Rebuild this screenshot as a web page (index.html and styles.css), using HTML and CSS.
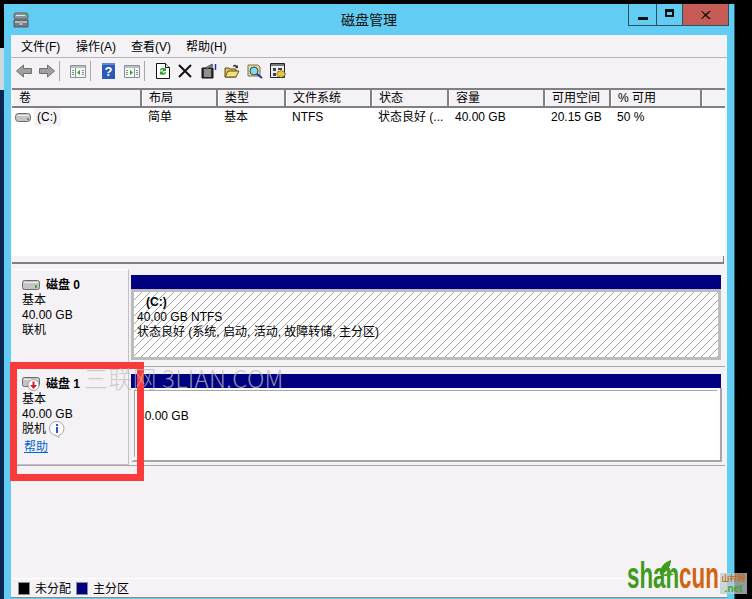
FILE: index.html
```html
<!DOCTYPE html>
<html lang="zh-CN">

<head>
  <meta name="viewport" content="width=device-width, initial-scale=1.0">
  <meta charset="utf-8">
  <title>磁盘管理</title>

  <link rel="stylesheet" href="styles.css">
</head>

<body>
  <div class="screen">
    <!-- 左侧露出的桌面 -->
    <div class="desk-edge">
      <div class="edge-top"></div>
      <div class="edge-light"></div>
      <div class="edge-dark"></div>
    </div>

    <div class="window">
      <div class="titlebar">
        <div class="title-left">
          <svg class="app-icon" width="16" height="16" viewBox="0 0 16 16">
            <path d="M2 1h12l1 2v3l-1 1H2L1 6V3z" fill="#8d9499" stroke="#5c6468"/>
            <path d="M3 3h9v1H3z" fill="#dfe4e6"/>
            <path d="M12 2h2v2h-2z" fill="#49c04a"/>
            <path d="M1 8h14v7H1z" fill="#767e84" stroke="#4e565a"/>
            <path d="M2 9h12v2H2z" fill="#b4bbc0"/>
            <path d="M6 11h4v2H6z" fill="#dfe4e6" stroke="#4e565a" stroke-width=".5"/>
          </svg>
        </div>
        <div class="title-text">磁盘管理</div>
        <div class="caption">
          <div class="cap-btn cap-min"><span></span></div>
          <div class="cap-btn cap-max"><span></span></div>
          <div class="cap-btn cap-close">
            <svg width="10" height="8" viewBox="0 0 10 8"><path d="M1 0l3.500 3L8 0h2L5.700 4 10 8H8L4.500 5 1 8H0l3.500-4L0 0z" fill="#111"/></svg>
          </div>
        </div>
      </div>

      <div class="client">
        <div class="menubar">
          <span class="menu-item">文件(F)</span>
          <span class="menu-item">操作(A)</span>
          <span class="menu-item">查看(V)</span>
          <span class="menu-item">帮助(H)</span>
        </div>

        <div class="toolbar">
          <svg class="tool" width="16" height="16" viewBox="0 0 16 16"><path d="M.5 8l7-6v3.500h8v5h-8V14z" fill="#a0a0a0" stroke="#707070"/></svg>
          <svg class="tool tool-fwd" width="16" height="16" viewBox="0 0 16 16"><path d="M15.500 8l-7-6v3.500h-8v5h8V14z" fill="#a0a0a0" stroke="#707070"/></svg>
          <i class="tool-sep"></i>
          <svg class="tool tool-tree" width="16" height="16" viewBox="0 0 16 16">
            <path d="M.5 2.500h15v12H.5z" fill="#f4f6f4" stroke="#8a9498"/><path d="M1 3h14v2H1z" fill="#b6c0c6"/>
            <path d="M5.500 5v9" stroke="#8a9498"/><path d="M2 7h2v1H2zM2 9h2v1H2zM2 11h2v1H2zM12 7h2v1h-2zM12 9h2v1h-2zM12 11h2v1h-2z" fill="#7f8f9c"/>
            <path d="M10 7v5L7 9.500z" fill="#2fa52f"/>
          </svg>
          <i class="tool-sep"></i>
          <svg class="tool tool-help" width="13" height="16" viewBox="0 0 13 16">
            <path d="M0 0h13v16H0z" fill="#2c58b8"/><path d="M0 0h13v2H0z" fill="#5d88d8"/>
            <text x="6.500" y="13" class="help-mark">?</text>
          </svg>
          <svg class="tool tool-panel" width="16" height="16" viewBox="0 0 16 16">
            <path d="M.5 2.500h15v12H.5z" fill="#f4f6f4" stroke="#8a9498"/><path d="M1 3h14v2H1z" fill="#b6c0c6"/>
            <path d="M10.500 5v9" stroke="#8a9498"/><path d="M2 7h2v1H2zM2 9h2v1H2zM2 11h2v1H2zM12 7h2v1h-2zM12 9h2v1h-2zM12 11h2v1h-2z" fill="#7f8f9c"/>
            <path d="M6 7v5l3-2.500z" fill="#2fa52f"/>
          </svg>
          <i class="tool-sep"></i>
          <svg class="tool tool-refresh" width="14" height="16" viewBox="0 0 14 16">
            <path d="M.5.500h9l4 4v11H.500z" fill="#fff" stroke="#111"/><path d="M9.500.500v4h4" fill="#e8e8e8" stroke="#111"/>
            <path d="M4 7a3 3 0 0 1 5-1.500L10 4v4H6l1.500-1.200A1.500 1.500 0 0 0 5 8z" fill="#2f9e2f"/>
            <path d="M10 9.500a3 3 0 0 1-5 1.500L4 12.500v-4h4L6.500 9.700A1.500 1.500 0 0 0 9 8.500z" fill="#2f9e2f"/>
          </svg>
          <svg class="tool tool-del" width="14" height="14" viewBox="0 0 14 14"><path d="M1 1l12 12M13 1L1 13" stroke="#111" stroke-width="2"/></svg>
          <svg class="tool tool-props" width="16" height="16" viewBox="0 0 16 16">
            <path d="M1 5h11v10H1z" fill="#333" stroke="#111"/><path d="M3 7h7M3 9h7M3 11h7M3 13h7" stroke="#eee"/>
            <path d="M4 5l7-4 1 2-6 3z" fill="#888" stroke="#222" stroke-width=".6"/><path d="M14.500 1v6" stroke="#2233aa" stroke-width="1.500"/>
          </svg>
          <svg class="tool tool-folder" width="16" height="16" viewBox="0 0 16 16">
            <path d="M1 5h4l1 1h6v8H1z" fill="#e8c34e" stroke="#5d5020"/><path d="M1 14l3-6h11l-3 6z" fill="#f6de7c" stroke="#5d5020"/>
            <path d="M9 3c2-2 3-1 4 0l1-1v3h-3l1-1c-1-.6-2-.6-3 0z" fill="#333"/>
          </svg>
          <svg class="tool tool-find" width="16" height="16" viewBox="0 0 16 16">
            <path d="M1 2h10l2 2v9H1z" fill="#e0d9a6" stroke="#77744e"/>
            <circle cx="7" cy="8" r="4" fill="#7fd8ec" stroke="#444"/>
            <path d="M10 11l5 4" stroke="#2233aa" stroke-width="2"/>
          </svg>
          <svg class="tool tool-gear" width="16" height="16" viewBox="0 0 16 16">
            <path d="M.5.500h14v14H.500z" fill="#eee" stroke="#222"/><path d="M1 1h13v2H1z" fill="#777"/>
            <path d="M3 5h3v3H3zM8 5h4v2H8zM3 10h3v3H3z" fill="#444"/>
            <path d="M11 7l1 1.500 2-.5.500 2 1.500 1-1.500 1-.500 2-2-.5-1 1.500-1-1.500-2 .5-.5-2L6 11l1.500-1 .5-2 2 .5z" fill="#e8c92c" stroke="#444" stroke-width=".5"/>
          </svg>
        </div>

        <div class="list-pane">
          <div class="list-head">
            <div>卷</div>
            <div>布局</div>
            <div>类型</div>
            <div>文件系统</div>
            <div>状态</div>
            <div>容量</div>
            <div>可用空间</div>
            <div>% 可用</div>
            <div></div>
          </div>
          <div class="list-body">
            <div class="list-row">
              <div class="vol-cell">
                <svg class="disk-icon" width="16" height="9" viewBox="0 0 16 9">
                  <rect x=".5" y=".5" width="15" height="8" rx="3" fill="#c4c4c4" stroke="#6c6c6c"/>
                  <path d="M2 2h12v1H2z" fill="#ececec"/><path d="M12 5h2v2h-2z" fill="#4ca84c"/>
                </svg>
                <span class="vol-name">(C:)</span>
              </div>
              <div>简单</div>
              <div>基本</div>
              <div>NTFS</div>
              <div>状态良好 (...</div>
              <div>40.00 GB</div>
              <div>20.15 GB</div>
              <div>50 %</div>
              <div></div>
            </div>
          </div>
          <div class="list-foot"></div>
        </div>

        <div class="disks">
          <div class="disk-row disk-row-0">
            <div class="disk-label">
              <div class="disk-name">
                <svg width="18" height="10" viewBox="0 0 18 10">
                  <rect x=".5" y=".5" width="17" height="9" rx="2" fill="#c4c4c4" stroke="#6c6c6c"/>
                  <path d="M2 2h14v1H2z" fill="#ececec"/><path d="M13 5h2v3h-2z" fill="#4ca84c"/>
                </svg>
                <b>磁盘 0</b>
              </div>
              <div class="disk-line">基本</div>
              <div class="disk-line">40.00 GB</div>
              <div class="disk-line">联机</div>
            </div>
            <div class="disk-map">
              <div class="navy-bar"></div>
              <div class="part-online">
                <div class="part-hatch">
                  <b class="part-name">(C:)</b>
                  <div>40.00 GB NTFS</div>
                  <div>状态良好 (系统, 启动, 活动, 故障转储, 主分区)</div>
                </div>
              </div>
            </div>
          </div>

          <div class="disk-row disk-row-1">
            <div class="disk-label">
              <div class="disk-name">
                <svg width="18" height="14" viewBox="0 0 18 14">
                  <rect x=".5" y=".5" width="17" height="9" rx="2" fill="#c4c4c4" stroke="#6c6c6c"/>
                  <path d="M2 2h14v1H2z" fill="#ececec"/>
                  <circle cx="11.500" cy="8" r="5.500" fill="#fff" stroke="#999"/>
                  <path d="M10.500 4.500h2V8H15l-3.500 4L8 8h2.500z" fill="#d2202a"/>
                </svg>
                <b>磁盘 1</b>
              </div>
              <div class="disk-line">基本</div>
              <div class="disk-line">40.00 GB</div>
              <div class="disk-line offline">
                脱机
                <svg width="16" height="17" viewBox="0 0 16 17">
                  <path d="M8 .5a7 7 0 0 1 2 13.700V16.500L7 14.500A7 7 0 0 1 8 .5z" fill="#fbfbfb" stroke="#a8a8a8"/>
                  <path d="M7 3h2v2H7zM7 6h2v6H7z" fill="#1f5fc8"/>
                </svg>
              </div>
              <a class="help-link">帮助</a>
            </div>
            <div class="disk-map">
              <div class="navy-bar"></div>
              <div class="part-offline">
                <div class="part-white">40.00 GB</div>
              </div>
            </div>
          </div>
        </div>

        <div class="spare"></div>

        <div class="legend">
          <i class="swatch swatch-black"></i><span class="legend-text">未分配</span>
          <i class="swatch swatch-navy"></i><span class="legend-text">主分区</span>
        </div>
      </div>
    </div>

    <!-- 截图上后加的标注和水印 -->
    <div class="red-mark"></div>
    <div class="watermark">三联网 3LIAN.COM</div>
    <div class="logo">
      <span class="logo-word"><span class="logo-shan">shan</span><span class="logo-cun">cun</span></span>
      <svg class="logo-leaf" width="18" height="16" viewBox="0 0 18 16">
        <path d="M4 15C3 8 8 2 15 0c0 7-4 12-11 15z" fill="#3f9a1e"/>
        <path d="M6 15c3-1 8-2 12-1-3 2-8 3-12 1z" fill="#4aa526"/>
      </svg>
      <div class="logo-tail">
        <div class="logo-cn">山村网</div>
        <div class="logo-net">.net</div>
      </div>
    </div>
  </div>
</body>

</html>
```

FILE: styles.css
```css
html, body {
  margin: 0;
  padding: 0;
  background: #000;
}

.screen {
  position: relative;
  display: flex;
  width: 752px;
  height: 599px;
  overflow: hidden;
  background: #000;
  font-family: "Liberation Sans", "Noto Sans CJK SC", sans-serif;
  font-size: 12px;
  color: #000;
}

/* left edge */
.desk-edge {
  display: flex;
  flex-direction: column;
  width: 4px;
}
.edge-top {
  height: 48px;
  background: #000;
}
.edge-light {
  height: 42px;
  background: #c9dade;
}
.edge-dark {
  flex: 1;
  background: #082a52;
}

/* window */
.window {
  display: flex;
  flex-direction: column;
  width: 730px;
  height: 595px;
  margin-top: 4px;
  background: #62ccf2;
  border-right: 1px solid #2c5f74;
}

.titlebar {
  display: grid;
  grid-template-columns: 1fr auto 1fr;
  height: 31px;
}
.title-left {
  padding: 8px 0 0 9px;
}
.app-icon {
  display: block;
}
.title-text {
  font-size: 14px;
  line-height: 32px;
  color: #111;
}
.caption {
  display: flex;
  justify-content: flex-end;
  align-items: flex-start;
  padding-right: 5px;
}
.cap-btn {
  display: flex;
  align-items: center;
  justify-content: center;
  box-sizing: border-box;
  height: 22px;
  border: 1px solid #28505f;
  border-top: 0;
  margin-left: -1px;
}
.cap-min {
  width: 29px;
  align-items: flex-end;
  padding-bottom: 5px;
}
.cap-min span {
  width: 10px;
  height: 3px;
  background: #111;
}
.cap-max {
  width: 27px;
  padding-bottom: 4px;
}
.cap-max span {
  box-sizing: border-box;
  width: 9px;
  height: 8px;
  border: 2px solid #111;
  border-top-width: 3px;
}
.cap-close {
  width: 47px;
  background: #c75b55;
  padding-top: 1px;
}

.client {
  display: flex;
  flex-direction: column;
  flex: 1;
  margin: 0 7px 1px;
  background: #f5f2f6;
}

.menubar {
  display: flex;
  align-items: center;
  box-sizing: border-box;
  height: 23px;
  padding: 0 0 2px 10px;
  border-bottom: 1px solid #b4b4b8;
}
.menu-item {
  width: 55px;
  white-space: nowrap;
}

.toolbar {
  display: flex;
  align-items: center;
  box-sizing: border-box;
  height: 29px;
  padding: 0 0 3px 5px;
}
.tool {
  display: block;
  flex: none;
}
.tool-fwd {
  margin-left: 7px;
}
.tool-sep {
  display: block;
  width: 1px;
  height: 20px;
  margin: 0 10px 0 4px;
  background: #a8a8ac;
}
.tool-help {
  margin-left: 1px;
}
.tool-panel {
  margin-left: 9px;
}
.tool-refresh {
  margin-left: 1px;
}
.tool-del {
  margin-left: 8px;
}
.tool-props {
  margin-left: 9px;
}
.tool-folder,
.tool-find,
.tool-gear {
  margin-left: 7px;
}
.help-mark {
  font-family: "Liberation Sans", sans-serif;
  font-size: 13px;
  font-weight: bold;
  text-anchor: middle;
  fill: #fff;
}

/* volume list */
.list-pane {
  display: flex;
  flex-direction: column;
  height: 176px;
  margin: 1px 2px 0 1px;
}
.list-head,
.list-row {
  display: grid;
  grid-template-columns: 130px 76px 68px 86px 77px 96px 66px 91px 1fr;
}
.list-head {
  box-sizing: border-box;
  height: 20px;
  border-top: 2px solid #808084;
  border-bottom: 2px solid #808084;
  line-height: 16px;
}
.list-head div {
  padding-left: 6px;
  border-right: 2px solid #808084;
  border-left: 1px solid #fff;
  box-sizing: border-box;
}
.list-head div:last-child {
  border-right: 0;
}
.list-body {
  flex: 1;
  background: #fff;
}
.list-row {
  height: 18px;
  line-height: 18px;
}
.list-row div {
  padding-left: 6px;
  white-space: nowrap;
}
.list-row .vol-cell {
  display: flex;
  align-items: center;
  padding-left: 3px;
}
.disk-icon {
  display: block;
}
.vol-name {
  width: 24px;
  margin-left: 3px;
  padding-left: 3px;
  background: #f7f2f6;
}
.list-foot {
  box-sizing: border-box;
  height: 8px;
  margin-right: 1px;
  border-bottom: 2px solid #808084;
  border-right: 1px solid #808084;
}

/* graphic view */
.disks {
  padding: 0 2px 0 2px;
}
.disk-row {
  display: flex;
  gap: 2px;
  box-sizing: border-box;
  border-bottom: 1px solid #a8a4aa;
}
.disk-row-0 {
  height: 103px;
  padding-top: 5px;
}
.disk-row-1 {
  height: 99px;
  padding-top: 1px;
}
.disk-label {
  box-sizing: border-box;
  width: 116px;
  padding: 7px 0 0 9px;
  border-right: 1px solid #c4c0c6;
  border-top: 1px solid #fff;
  line-height: 15px;
}
.disk-row-1 .disk-label {
  border-bottom: 1px solid #c4c0c6;
}
.disk-name {
  display: flex;
  align-items: center;
  gap: 6px;
  height: 16px;
}
.disk-line {
  height: 15px;
  white-space: nowrap;
}
.offline {
  display: flex;
  align-items: center;
  gap: 3px;
}
.help-link {
  display: block;
  margin: 3px 0 0 2px;
  color: #0066cc;
  text-decoration: underline;
}
.disk-map {
  display: flex;
  flex-direction: column;
  width: 591px;
}
.disk-row-0 .disk-map {
  width: 590px;
  padding-top: 6px;
}
.disk-row-1 .disk-map {
  padding-top: 6px;
}
.disk-row-1 .navy-bar {
  margin-right: 1px;
}
.navy-bar {
  height: 14px;
  background: #000080;
}
.part-online {
  box-sizing: border-box;
  height: 71px;
  border: 3px solid #bcbcbc;
}
.part-hatch {
  height: 100%;
  padding: 3px 0 0 3px;
  box-sizing: border-box;
  line-height: 15px;
  white-space: nowrap;
  background: repeating-linear-gradient(-45deg, #a6a6a6 0, #a6a6a6 1px, #fff 1px, #fff 5.66px);
}
.part-name {
  display: block;
  padding-left: 9px;
}
.part-offline {
  box-sizing: border-box;
  height: 74px;
  background: #fdfdfd;
  border-left: 3px solid #f5f2f6;
  border-right: 2px solid #a8a4aa;
  border-bottom: 2px solid #a8a4aa;
  padding: 2px 3px 3px 0;
}
.part-white {
  box-sizing: border-box;
  height: 100%;
  padding: 18px 0 0 3px;
  line-height: 15px;
  background: #fff;
  border-top: 1px solid #a8a4aa;
  border-left: 1px solid #a8a4aa;
}

.spare {
  flex: 1;
  border-bottom: 1px solid #fff;
}

.legend {
  display: flex;
  align-items: center;
  box-sizing: border-box;
  height: 19px;
  padding: 1px 0 0 7px;
  line-height: 17px;
  border-bottom: 1px solid #8c8c90;
}
.legend-text {
  padding-top: 2px;
}
.swatch {
  display: block;
  box-sizing: border-box;
  width: 12px;
  height: 13px;
  border: 1px solid #8c8c90;
  margin-right: 5px;
}
.swatch-black {
  background: #000;
}
.swatch-navy {
  margin-left: 5px;
  background: #000080;
}

/* overlays */
.red-mark {
  position: absolute;
  left: 10px;
  top: 362px;
  box-sizing: border-box;
  width: 134px;
  height: 119px;
  border: 7px solid #fb3a3c;
}
.watermark {
  position: absolute;
  left: 84px;
  top: 361px;
  font-family: "Noto Sans CJK SC", "Liberation Sans", sans-serif;
  font-size: 24px;
  font-weight: 300;
  line-height: 34px;
  letter-spacing: .2px;
  white-space: nowrap;
  color: rgba(190, 190, 190, .75);
}
.logo {
  position: absolute;
  left: 627px;
  top: 558px;
  width: 120px;
  height: 38px;
  font-weight: bold;
}
.logo-word {
  position: absolute;
  left: 0;
  bottom: 0;
  font-size: 36px;
  line-height: 40px;
  white-space: nowrap;
  transform: scaleX(.62);
  transform-origin: left bottom;
}
.logo-leaf {
  position: absolute;
  left: 29px;
  top: 2px;
}
.logo-shan {
  color: #3f9a1e;
}
.logo-cun {
  color: #d0640f;
}
.logo-tail {
  position: absolute;
  left: 93px;
  top: 15px;
  width: 27px;
  height: 21px;
  text-align: center;
  background: rgba(190, 205, 205, .75);
}
.logo-cn {
  font-size: 8px;
  line-height: 11px;
  color: #c8691e;
}
.logo-net {
  font-family: "Liberation Sans", sans-serif;
  font-size: 10px;
  line-height: 10px;
  color: #4f9a35;
}
```
